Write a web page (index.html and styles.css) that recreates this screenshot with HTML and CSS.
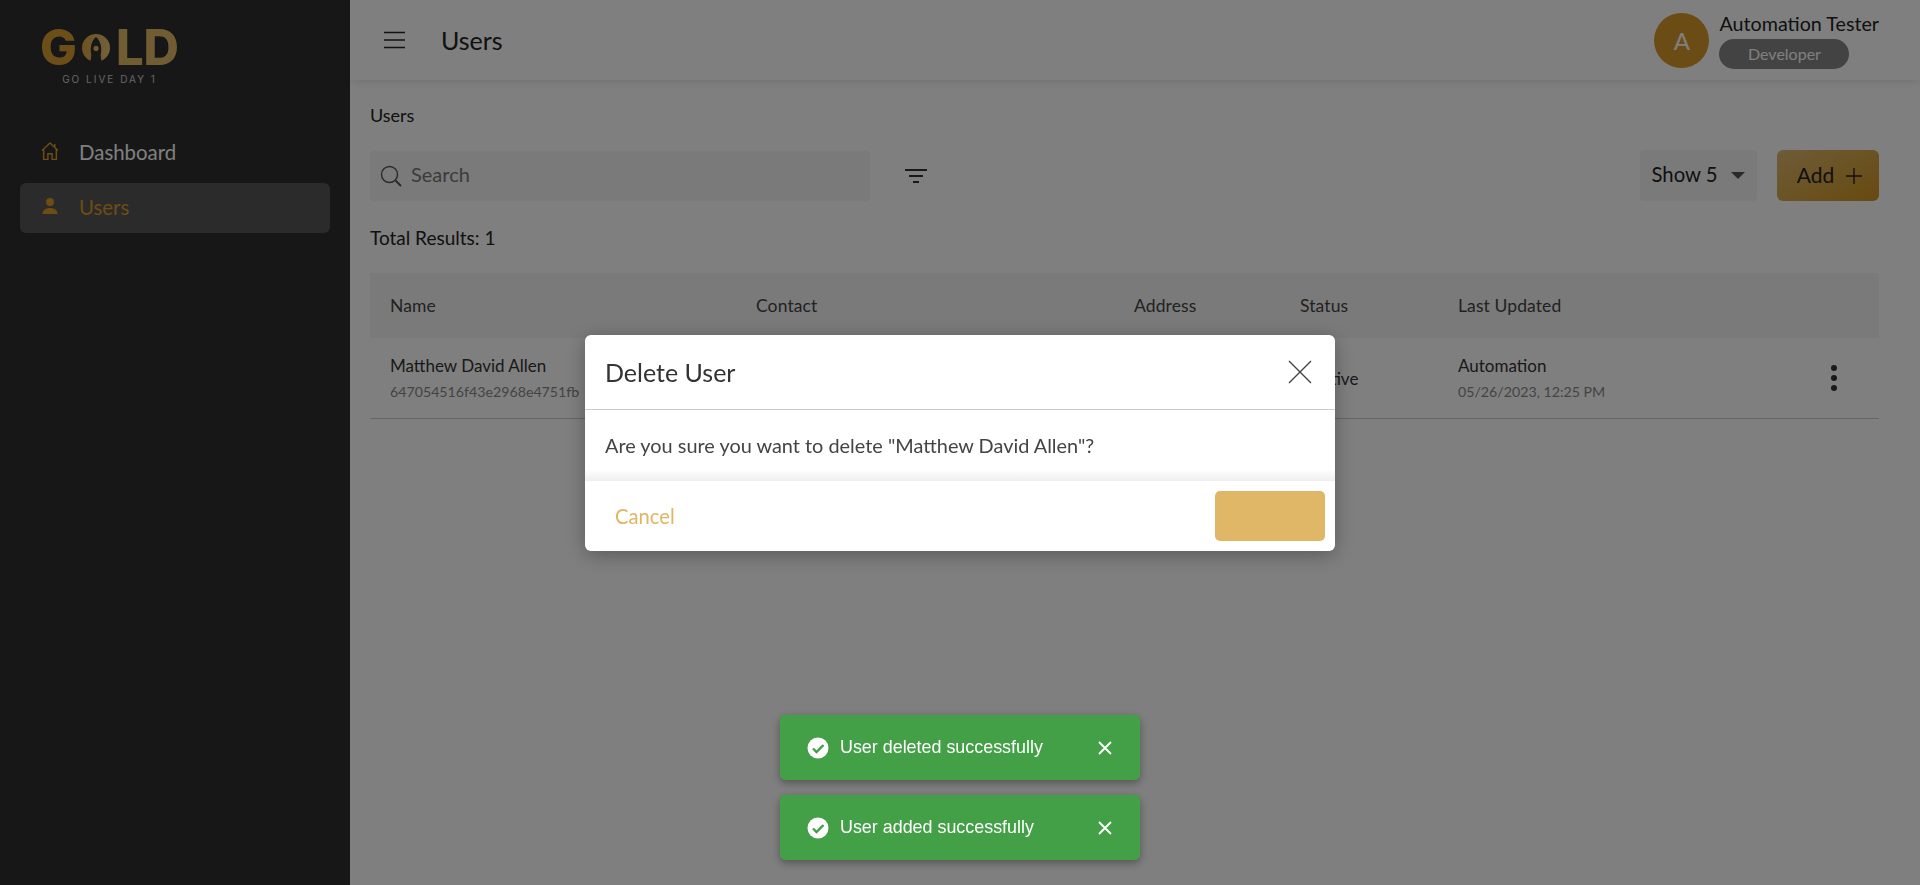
FILE: index.html
```html
<!DOCTYPE html>
<html lang="en">
<head>
    <meta charset="UTF-8">
    <title>Users</title>
    <link rel="stylesheet" href="styles.css">
</head>
<body>
    <aside class="sidebar">
        <div class="logo">
            <div class="logo-word">
                <span class="logo-g">G</span>
                <svg class="logo-o" width="36" height="36" viewBox="0 0 36 36">
                    <defs>
                        <linearGradient id="logoGold" x1="0" y1="0" x2="1" y2="0">
                            <stop offset="0" stop-color="#dba63f"/>
                            <stop offset="1" stop-color="#e6c274"/>
                        </linearGradient>
                    </defs>
                    <path fill="url(#logoGold)" d="M11 34.500C4 31 0 25 0 18A18 18 0 0 1 36 18C36 25 32 31 25 34.500L24 27C26 18 24 9 18 4 12 9 10 18 12 27Z"/>
                    <circle cx="18" cy="18.500" r="3.300" fill="url(#logoGold)"/>
                </svg>
                <span class="logo-ld">LD</span>
            </div>
            <div class="logo-sub">GO LIVE DAY 1</div>
        </div>
        <nav class="side-nav">
            <a class="nav-item">
                <svg class="nav-icon" width="18" height="18" viewBox="1 0.500 16 17" fill="none" stroke="#d89a28" stroke-width="1.400">
                    <path d="M1.500 8.500 9 1.500l7.500 7M3 7.500V17h4v-5.500h4V17h4V7.500M13.500 2.500V5"/>
                </svg>
                <span>Dashboard</span>
            </a>
            <a class="nav-item active">
                <svg class="nav-icon" width="18" height="18" viewBox="0 0 18 18" fill="#d89a28">
                    <circle cx="9" cy="5" r="4"/>
                    <path d="M1.500 17c0-4 3.400-6 7.500-6s7.500 2 7.500 6z"/>
                </svg>
                <span>Users</span>
            </a>
        </nav>
    </aside>

    <div class="main">
        <header class="topbar">
            <div class="topbar-left">
                <svg class="menu-icon" width="22" height="18" viewBox="0 0 22 18" stroke="#222" stroke-width="1.600">
                    <path d="M0 1.500h21M0 9h21M0 16.500h21"/>
                </svg>
                <h1 class="page-title">Users</h1>
            </div>
            <div class="profile">
                <div class="avatar">A</div>
                <div class="profile-info">
                    <div class="profile-name">Automation Tester</div>
                    <div class="profile-role">Developer</div>
                </div>
            </div>
        </header>

        <section class="content">
            <div class="crumb">Users</div>
            <div class="toolbar">
                <div class="search">
                    <svg width="22" height="22" viewBox="0 0 22 22" fill="none" stroke="#555" stroke-width="1.400">
                        <circle cx="9.500" cy="9.500" r="8"/>
                        <path d="m15.500 15.500 5.500 5.500" stroke-width="2"/>
                    </svg>
                    <span>Search</span>
                </div>
                <svg class="filter-icon" width="22" height="16" viewBox="0 0 22 16" stroke="#333" stroke-width="2">
                    <path d="M0 2h22M4 8h14M8 14h6"/>
                </svg>
                <div class="toolbar-right">
                    <div class="show-select"><span>Show 5</span> <i class="caret"></i></div>
                    <button class="add-btn"><span>Add</span>
                        <svg width="16" height="16" viewBox="0 0 16 16" stroke="#222" stroke-width="1.400"><path d="M8 0v16M0 8h16"/></svg>
                    </button>
                </div>
            </div>
            <div class="total">Total Results: <b>1</b></div>

            <div class="table">
                <div class="row head">
                    <div>Name</div>
                    <div>Contact</div>
                    <div>Address</div>
                    <div>Status</div>
                    <div>Last Updated</div>
                    <div></div>
                </div>
                <div class="row body">
                    <div>
                        <div class="cell-main">Matthew David Allen</div>
                        <div class="cell-sub">647054516f43e2968e4751fb</div>
                    </div>
                    <div></div>
                    <div></div>
                    <div class="cell-status">Active</div>
                    <div>
                        <div class="cell-main">Automation</div>
                        <div class="cell-sub">05/26/2023, 12:25 PM</div>
                    </div>
                    <div class="dots"><i></i><i></i><i></i></div>
                </div>
            </div>
        </section>
    </div>

    <div class="overlay">
        <div class="modal">
            <div class="modal-head">
                <h2>Delete User</h2>
                <svg width="24" height="24" viewBox="0 0 24 24" stroke="#444" stroke-width="1.400"><path d="m1 1 22 22M23 1 1 23"/></svg>
            </div>
            <div class="modal-body">Are you sure you want to delete "Matthew David Allen"?</div>
            <div class="modal-foot">
                <a class="cancel">Cancel</a>
                <button class="confirm"></button>
            </div>
        </div>
    </div>

    <div class="toasts">
        <div class="toast">
            <svg width="22" height="22" viewBox="0 0 22 22"><circle cx="11" cy="11" r="10.500" fill="#fff"/><path d="m6 11.500 3.500 3.500L16.500 8" fill="none" stroke="#43a047" stroke-width="2.400"/></svg>
            <span>User deleted successfully</span>
            <svg class="toast-close" width="14" height="14" viewBox="0 0 14 14" stroke="#fff" stroke-width="1.800"><path d="m1 1 12 12M13 1 1 13"/></svg>
        </div>
        <div class="toast">
            <svg width="22" height="22" viewBox="0 0 22 22"><circle cx="11" cy="11" r="10.500" fill="#fff"/><path d="m6 11.500 3.500 3.500L16.500 8" fill="none" stroke="#43a047" stroke-width="2.400"/></svg>
            <span>User added successfully</span>
            <svg class="toast-close" width="14" height="14" viewBox="0 0 14 14" stroke="#fff" stroke-width="1.800"><path d="m1 1 12 12M13 1 1 13"/></svg>
        </div>
    </div>
</body>
</html>
```

FILE: styles.css
```css
* {
    box-sizing: border-box;
}
body {
    margin: 0;
    height: 885px;
    overflow: hidden;
    display: flex;
    font-family: Lato, "Open Sans", sans-serif;
    color: #222;
    background-color: #fff;
}
.sidebar {
    width: 350px;
    flex-shrink: 0;
    background-color: #2e2e2e;
    padding: 30px 20px 0;
}
.logo {
    width: 139px;
    margin-left: 20px;
    height: 98px;
}
.logo-word {
    display: flex;
    align-items: center;
    height: 36px;
    gap: 5px;
    font-family: Inter, Lato, sans-serif;
    font-weight: 800;
    font-size: 49px;
    line-height: 36px;
}
.logo-g {
    color: #d99f30;
}
.logo-ld {
    color: #e2bb68;
    margin-left: 1px;
}
.logo-sub {
    margin-top: 7px;
    text-align: center;
    font-size: 10px;
    letter-spacing: 2px;
    color: #ccc;
    font-family: Inter, sans-serif;
}
.side-nav {
    display: flex;
    flex-direction: column;
}
.nav-item {
    display: flex;
    align-items: center;
    height: 50px;
    padding-left: 21px;
    margin-bottom: 5px;
    font-size: 20.400px;
    color: #fff;
    border-radius: 6px;
}
.nav-item span {
    margin-bottom: 3px;
}
.nav-item .nav-icon {
    margin-right: 20px;
    margin-bottom: 5px;
}
.nav-item.active {
    background-color: #575757;
    color: #d89a28;
}
.main {
    flex: 1;
    min-width: 0;
}
.topbar {
    height: 80px;
    display: flex;
    align-items: center;
    justify-content: space-between;
    padding: 0 41px 0 34px;
    box-shadow: 0 2px 8px rgba(0, 0, 0, 0.1);
}
.topbar-left {
    display: flex;
    align-items: center;
    gap: 35px;
}
.page-title {
    margin: 0;
    font-size: 25px;
    font-weight: 400;
}
.profile {
    display: flex;
    align-items: center;
    gap: 10px;
}
.avatar {
    width: 55px;
    height: 55px;
    border-radius: 50%;
    background-color: #d69828;
    color: #fff;
    font-size: 24px;
    display: flex;
    align-items: center;
    justify-content: center;
}
.profile-name {
    font-size: 19.700px;
    line-height: 24px;
    margin-bottom: 3px;
}
.profile-role {
    width: 130px;
    height: 30px;
    line-height: 30px;
    border-radius: 15px;
    background-color: #868686;
    color: #fff;
    text-align: center;
    font-size: 16px;
}
.content {
    padding: 0 41px 0 20px;
}
.crumb {
    margin-top: 24px;
    font-size: 18px;
    line-height: 22px;
}
.toolbar {
    display: flex;
    align-items: center;
    margin-top: 24px;
}
.search {
    width: 500px;
    height: 50px;
    display: flex;
    align-items: center;
    gap: 9px;
    padding-left: 10px;
    background-color: #f5f5f5;
    border-radius: 4px;
    color: #777;
    font-size: 20px;
}
.search span, .show-select span, .add-btn span {
    margin-bottom: 3px;
}
.filter-icon {
    margin-left: 35px;
}
.toolbar-right {
    margin-left: auto;
    display: flex;
    gap: 20px;
}
.show-select {
    width: 117px;
    height: 51px;
    display: flex;
    align-items: center;
    justify-content: center;
    gap: 14px;
    font-size: 20.300px;
    background-color: #f5f5f5;
    border-radius: 4px;
}
.caret {
    width: 0;
    height: 0;
    border-left: 7px solid transparent;
    border-right: 7px solid transparent;
    border-top: 7px solid #555;
}
.add-btn {
    width: 102px;
    height: 51px;
    display: flex;
    align-items: center;
    justify-content: center;
    gap: 12px;
    border: none;
    border-radius: 6px;
    padding: 0 0 0 3px;
    font-family: inherit;
    font-size: 21px;
    color: #222;
    background: linear-gradient(150deg, #dcb870, #d09420);
}
.total {
    margin-top: 25px;
    font-size: 19px;
    line-height: 24px;
}
.total b {
    font-weight: 400;
}
.table {
    margin-top: 23px;
}
.row {
    display: grid;
    grid-template-columns: 366px 378px 166px 158px 1fr 48px;
    align-items: center;
    padding-left: 20px;
}
.row.head {
    height: 65px;
    background-color: #f5f5f5;
    font-size: 17.500px;
    letter-spacing: 0.100px;
    color: #444;
}
.row.body {
    height: 81px;
    border-bottom: 1px solid #ccc;
}
.cell-main {
    font-size: 17px;
    line-height: 22px;
    color: #333;
}
.cell-sub {
    font-size: 14.200px;
    line-height: 18px;
    margin-top: 6px;
    color: #888;
}
.cell-status {
    font-size: 17px;
    color: #333;
    margin-left: 11px;
}
.dots {
    display: flex;
    flex-direction: column;
    gap: 4px;
    align-items: center;
    width: 6px;
}
.dots i {
    width: 6px;
    height: 6px;
    border-radius: 50%;
    background-color: #333;
}
.overlay {
    position: fixed;
    inset: 0;
    background-color: rgba(0, 0, 0, 0.5);
    display: flex;
    justify-content: center;
    align-items: flex-start;
    padding-top: 335px;
}
.modal {
    width: 750px;
    height: 216px;
    background-color: #fff;
    border-radius: 6px;
    box-shadow: 0 4px 20px rgba(0, 0, 0, 0.3);
    overflow: hidden;
}
.modal-head {
    height: 75px;
    display: flex;
    align-items: center;
    justify-content: space-between;
    padding: 0 23px 0 20px;
    border-bottom: 1px solid #ccc;
    box-shadow: 0 2px 5px rgba(0, 0, 0, 0.06);
}
.modal-head h2 {
    margin: 0;
    font-size: 25px;
    font-weight: 400;
    color: #333;
}
.modal-body {
    height: 71px;
    padding: 0 20px;
    display: flex;
    align-items: center;
    font-size: 19.900px;
    color: #444;
    border-bottom: 1px solid #eee;
    background: linear-gradient(to bottom, #fff 85%, #f0f0f0);
}
.modal-foot {
    height: 70px;
    display: flex;
    align-items: center;
    justify-content: space-between;
    padding: 0 10px 0 30px;
}
.cancel {
    color: #e0b565;
    font-size: 20.200px;
}
.confirm {
    width: 110px;
    height: 50px;
    border: none;
    border-radius: 5px;
    background-color: #dfb767;
}
.toasts {
    position: fixed;
    left: 780px;
    top: 715px;
    display: flex;
    flex-direction: column;
    gap: 15px;
}
.toast {
    width: 360px;
    height: 65px;
    display: flex;
    align-items: center;
    padding: 0 28px 0 27px;
    background-color: #43a047;
    color: #fff;
    border-radius: 5px;
    font-family: "Liberation Sans", Arial, sans-serif;
    font-size: 17.900px;
    box-shadow: 0 3px 8px rgba(0, 0, 0, 0.35);
}
.toast span {
    margin-left: 11px;
    margin-bottom: 1px;
}
.toast-close {
    margin-left: auto;
}
```
